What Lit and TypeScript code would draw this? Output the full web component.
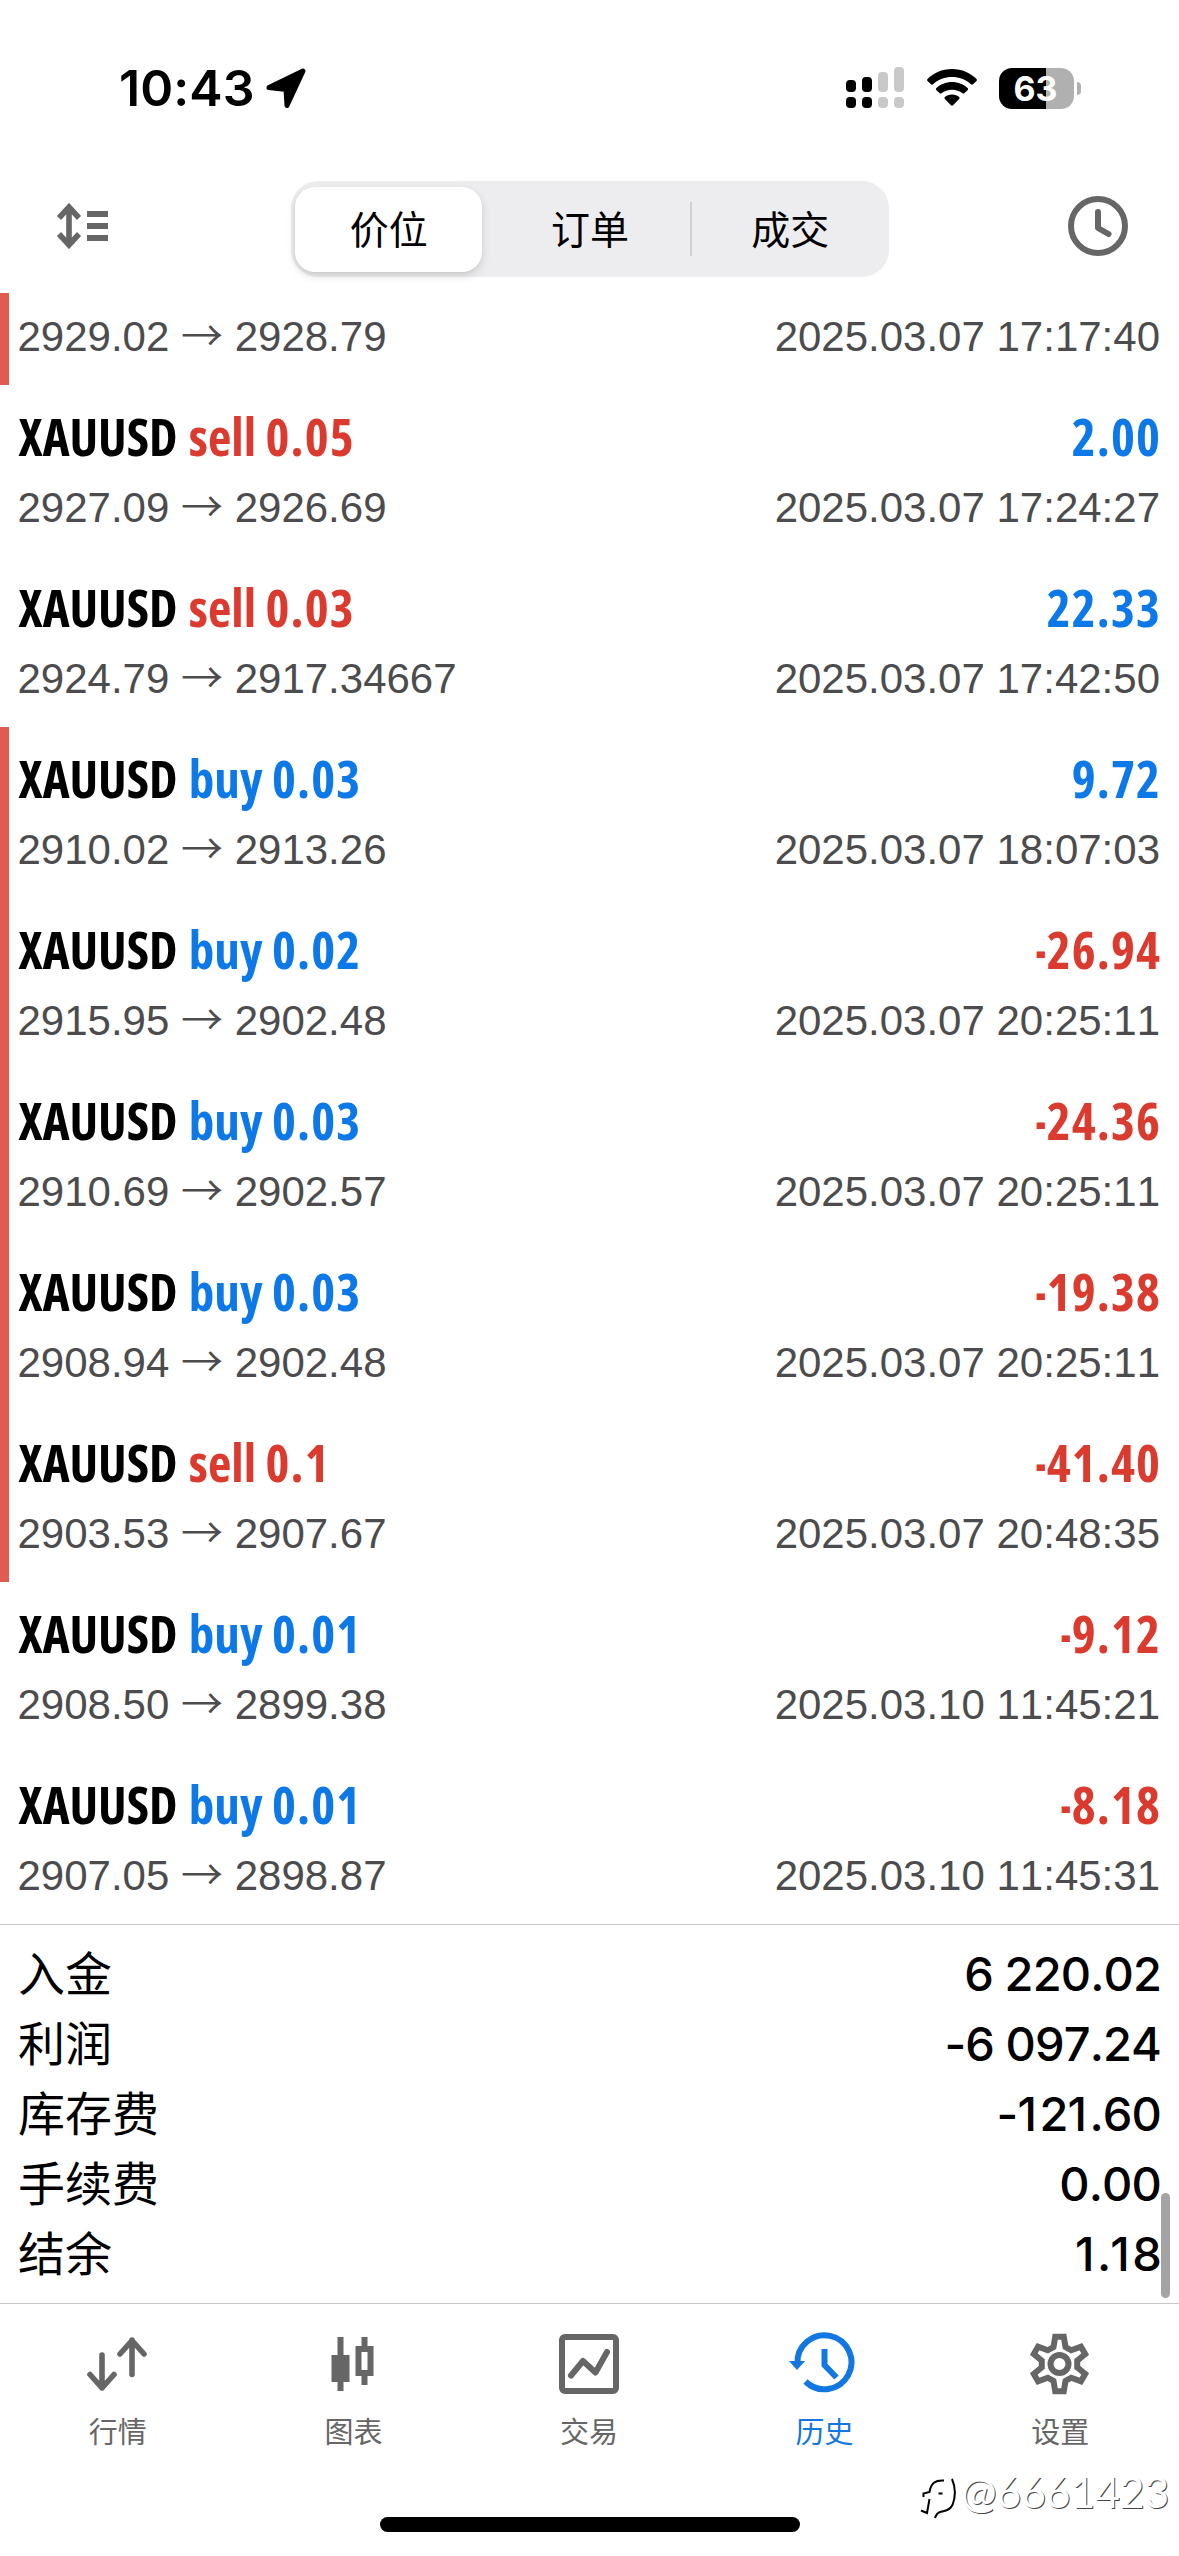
import { LitElement, html, css, svg, nothing } from "lit";
import { customElement, property } from "lit/decorators.js";
import { classMap } from "lit/directives/class-map.js";

interface Deal {
  side?: "buy" | "sell";
  lot?: string;
  profit?: string;
  open: string;
  close: string;
  time: string;
  marked?: boolean;
}

const DEALS: Deal[] = [
  { open: "2929.02", close: "2928.79", time: "2025.03.07 17:17:40", marked: true },
  { side: "sell", lot: "0.05", profit: "2.00", open: "2927.09", close: "2926.69", time: "2025.03.07 17:24:27" },
  { side: "sell", lot: "0.03", profit: "22.33", open: "2924.79", close: "2917.34667", time: "2025.03.07 17:42:50" },
  { side: "buy", lot: "0.03", profit: "9.72", open: "2910.02", close: "2913.26", time: "2025.03.07 18:07:03", marked: true },
  { side: "buy", lot: "0.02", profit: "-26.94", open: "2915.95", close: "2902.48", time: "2025.03.07 20:25:11", marked: true },
  { side: "buy", lot: "0.03", profit: "-24.36", open: "2910.69", close: "2902.57", time: "2025.03.07 20:25:11", marked: true },
  { side: "buy", lot: "0.03", profit: "-19.38", open: "2908.94", close: "2902.48", time: "2025.03.07 20:25:11", marked: true },
  { side: "sell", lot: "0.1", profit: "-41.40", open: "2903.53", close: "2907.67", time: "2025.03.07 20:48:35", marked: true },
  { side: "buy", lot: "0.01", profit: "-9.12", open: "2908.50", close: "2899.38", time: "2025.03.10 11:45:21" },
  { side: "buy", lot: "0.01", profit: "-8.18", open: "2907.05", close: "2898.87", time: "2025.03.10 11:45:31" },
];

const TOTALS: [string, string][] = [
  ["入金", "6 220.02"],
  ["利润", "-6 097.24"],
  ["库存费", "-121.60"],
  ["手续费", "0.00"],
  ["结余", "1.18"],
];

// Six-toothed gear outline centred on the origin.
const gearPath = (() => {
  const tooth = [[-6, -17], [-4.3, -27.2], [4.3, -27.2], [6, -17]];
  const pts: string[] = [];
  for (let k = 0; k < 6; k++) {
    const a = (k * Math.PI) / 3;
    for (const [x, y] of tooth) {
      pts.push(`${(x * Math.cos(a) - y * Math.sin(a)).toFixed(2)} ${(x * Math.sin(a) + y * Math.cos(a)).toFixed(2)}`);
    }
  }
  return `M${pts.join("L")}Z`;
})();

const TABS = [
  {
    label: "行情",
    icon: svg`<g fill="none" stroke="currentColor" stroke-width="5.6" stroke-linecap="round" stroke-linejoin="round">
      <path d="M14 21V54M2 40.500L14 54L26 40.500"/><path d="M44 40.500V6M32 20L44 6.500L56 20"/></g>`,
  },
  {
    label: "图表",
    icon: svg`<path fill="currentColor" fill-rule="evenodd" d="M14.500 3h6v18h6v27h-6v9h-6v-9h-6v-27h6zM38.500 3h6v9h6v30h-6v9h-6v-9h-6v-30h6zM38.500 18v18h6v-18z"/>`,
  },
  {
    label: "交易",
    icon: svg`<g fill="none" stroke="currentColor" stroke-width="6"><rect x="3" y="3" width="54" height="54" rx="3"/>
      <path stroke-linecap="round" stroke-linejoin="round" d="M12 41.500L24 27L36.500 38.500L48 18"/></g>`,
  },
  {
    label: "历史",
    icon: svg`<g fill="none" stroke="currentColor" stroke-width="6"><path d="M2.500 30A27 27 0 1 1 10.500 47.500"/>
      <path d="M29.500 15V31L41.500 43.500"/></g><path fill="currentColor" d="M-6 27H10L2 36z"/>`,
    active: true,
  },
  {
    label: "设置",
    icon: svg`<g transform="translate(29.500 30)" fill="none" stroke="currentColor" stroke-width="6">
      <path d=${gearPath}/><circle r="9" stroke-width="6"/></g>`,
  },
];

@customElement("status-bar")
class StatusBar extends LitElement {
  static styles = css`
    :host { display: flex; height: 181px; box-sizing: border-box; padding: 67px 98px 0 119px; justify-content: space-between; align-items: flex-start; }
    .left, .right { display: flex; align-items: center; height: 42px; }
    .time { font: 600 50px/42px Inter, sans-serif; letter-spacing: 0.1px; }
    .arrow { margin-left: 11px; }
    .signal { margin-right: 22px; }
    .wifi { margin-right: 22px; }
    .battery { display: flex; width: 75px; height: 41px; border-radius: 13px; background: linear-gradient(90deg, #000 47px, #b0b0b0 47px); color: #fff; justify-content: center; font: 700 34px/42px Inter, sans-serif; }
    .digits { margin-left: -2px; }
    .nub { width: 4px; height: 13px; margin-left: 3px; border-radius: 0 4px 4px 0; background: #b0b0b0; }
  `;
  render() {
    return html`
      <div class="left">
        <span class="time">10:43</span>
        <svg class="arrow" width="40" height="42" viewBox="0 0 40 42">
          <path d="M37 4L21 38.500L20 22.500L3 20.500Z" stroke="#000" stroke-width="5" stroke-linejoin="round"/>
        </svg>
      </div>
      <div class="right">
        <svg class="signal" width="59" height="42" viewBox="0 0 59 42">
          <g fill="#000"><rect y="13" width="10" height="12" rx="4"/><rect y="30" width="10" height="11" rx="4"/>
          <rect x="16" y="10" width="10" height="15" rx="4"/><rect x="16" y="30" width="10" height="11" rx="4"/></g>
          <g fill="#c9c9c9"><rect x="32" y="5" width="10" height="20" rx="4"/><rect x="32" y="30" width="10" height="11" rx="4"/>
          <rect x="48" width="10" height="25" rx="4"/><rect x="48" y="30" width="10" height="11" rx="4"/></g>
        </svg>
        <svg class="wifi" width="50" height="42" viewBox="0 0 50 42">
          <path d="M25 2C35 2 43.500 6 49.500 12Q50.300 13 49.500 14L46 17.300Q45 18 44 17.200C38.500 12.500 32 10 25 10S11.500 12.500 6 17.200Q5 18 4 17.300L.5 14Q-.3 13 .5 12C6.500 6 15 2 25 2z"/>
          <path d="M25 15C31.500 15 36.500 17.300 40.800 21.200Q41.600 22 40.800 23L37.300 26.300Q36.500 27 35.500 26.300C32.500 24 29 22.700 25 22.700S17.500 24 14.500 26.300Q13.500 27 12.700 26.300L9.200 23Q8.400 22 9.200 21.200C13.500 17.300 18.500 15 25 15z"/>
          <path d="M25 27.500C28 27.500 30.500 28.500 32.200 30Q33 31 32.200 31.900L26 38.300Q25 39.200 24 38.300L17.800 31.900Q17 31 17.800 30C19.500 28.500 22 27.500 25 27.500z"/>
        </svg>
        <div class="battery"><span class="digits">63</span></div>
        <div class="nub"></div>
      </div>
    `;
  }
}

@customElement("history-header")
class HistoryHeader extends LitElement {
  static styles = css`
    :host { display: flex; height: 112px; box-sizing: border-box; padding: 0 51px 0 56px; align-items: flex-start; color: #666; }
    .sort { margin: 22px 182px 0 0; }
    .clock { margin: 15px 0 0 179px; }
    .segments { display: grid; grid-template-columns: repeat(3, 1fr); grid-template-rows: 96px; width: 598px; border-radius: 27px; background: #ededef; color: #000; font: 400 39px/50px "Noto Sans CJK SC", sans-serif; }
    .segment { display: flex; justify-content: center; align-items: center; box-sizing: border-box; padding-bottom: 4px; }
    .segment.selected { margin: 5.500px 8px 5.500px 4px; border-radius: 20px; background: #fff; box-shadow: 0 4px 10px rgba(0, 0, 0, 0.13), 0 1px 3px rgba(0, 0, 0, 0.05); }
    .segment.last { background: linear-gradient(#d0d0d3, #d0d0d3) no-repeat 0 50% / 2px 54px; padding-left: 2px; }
  `;
  render() {
    return html`
      <svg class="sort" width="53" height="46" viewBox="0 0 53 46">
        <g fill="none" stroke="currentColor" stroke-width="5.600"><path d="M13 4V42M3 15L13 4L23 15M3 31L13 42L23 31"/></g>
        <path fill="currentColor" d="M31 8h21v6h-21zM31 20h21v6h-21zM31 32h21v6h-21z"/>
      </svg>
      <div class="segments">
        <div class="segment selected">价位</div>
        <div class="segment">订单</div>
        <div class="segment last">成交</div>
      </div>
      <svg class="clock" width="60" height="60" viewBox="0 0 60 60">
        <g fill="none" stroke="currentColor" stroke-width="6" stroke-linecap="round" stroke-linejoin="round"><circle cx="30" cy="30" r="27"/><path d="M30 16V32L40.500 38"/></g>
      </svg>
    `;
  }
}

@customElement("deal-row")
class DealRow extends LitElement {
  @property({ attribute: false }) deal!: Deal;
  static styles = css`
    :host { display: block; }
    .row { height: 171px; box-sizing: border-box; padding: 21px 19px 0 17.500px; border-left: 0 solid #e05c50; }
    .row.marked { border-left-width: 9px; padding-left: 8.500px; }
    .row.cut { height: 92px; padding-top: 14px; }
    .line { display: flex; justify-content: space-between; height: 60px; white-space: pre; }
    .title { font: 660 51px/60px "Open Sans", sans-serif; font-stretch: 75%; margin-bottom: 12px; padding-left: 1px; }
    .figure { letter-spacing: 1.100px; }
    .side { margin-left: 2px; letter-spacing: 0.100px; }
    .profit { margin-right: -1px; }
    .minus { display: inline-block; transform: scaleX(0.65); transform-origin: right; }
    .buy, .gain { color: #0d78e8; }
    .sell, .loss { color: #db3b2f; }
    .detail { font: 400 42px/60px "Liberation Sans", Arial, sans-serif; font-kerning: none; color: #4c4c4e; }
    .to { font: 350 42px/0 "Noto Sans CJK SC", sans-serif; }
  `;
  render() {
    const d = this.deal;
    const loss = !!d.profit?.startsWith("-");
    return html`<div class=${classMap({ row: true, marked: !!d.marked, cut: !d.side })}>
      ${d.side
        ? html`<div class="line title">
            <span>XAUUSD <span class="side ${d.side}">${d.side} <span class="figure">${d.lot}</span></span></span>
            <span class="figure profit ${loss ? "loss" : "gain"}">${loss ? html`<span class="minus">-</span>${d.profit!.slice(1)}` : d.profit}</span>
          </div>`
        : nothing}
      <div class="line detail"><span>${d.open} <span class="to">→</span> ${d.close}</span><span>${d.time}</span></div>
    </div>`;
  }
}

@customElement("app-root")
class AppRoot extends LitElement {
  static styles = css`
    :host { display: flex; flex-direction: column; position: relative; width: 1179px; height: 2556px; overflow: hidden; background: #fff; color: #000; }
    .summary { height: 380px; box-sizing: border-box; padding: 11px 18px 0 18px; border-top: 1px solid #c6c6c8; border-bottom: 1px solid #c6c6c8; }
    .total { display: flex; justify-content: space-between; align-items: baseline; height: 70px; line-height: 70px; white-space: pre; }
    .name { font-family: "Noto Sans CJK SC", sans-serif; font-size: 47px; }
    .value { font-family: Inter, sans-serif; font-weight: 500; font-size: 47px; font-kerning: none; letter-spacing: -0.900px; }
    .one { letter-spacing: 2.500px; }
    .thumb { position: absolute; left: 1161px; top: 2193px; width: 9px; height: 105px; border-radius: 5px; background: #a4a4a4; }
    .tabs { display: grid; grid-template-columns: repeat(5, 1fr); height: 213px; box-sizing: border-box; padding: 30px 1px 0 0; color: #666; font: 400 29px/36px "Noto Sans CJK SC", sans-serif; }
    .tab { display: flex; flex-direction: column; align-items: center; gap: 18px; }
    .tab.active { color: #1277e0; }
    .tab svg { overflow: visible; }
    .home { width: 420px; height: 15px; border-radius: 8px; background: #000; align-self: center; }
    .watermark { position: absolute; left: 920px; top: 2467px; display: flex; align-items: flex-start; gap: 5px; color: #fff; font: 400 42.500px/50px Lato, sans-serif; text-shadow: 1px 1px 0 #444; }
    .mark { margin-top: 10px; }
  `;
  render() {
    return html`
      <status-bar></status-bar>
      <history-header></history-header>
      <div class="list">${DEALS.map((d) => html`<deal-row .deal=${d}></deal-row>`)}</div>
      <div class="summary">
        ${TOTALS.map(([n, v]) => html`<div class="total"><span class="name">${n}</span><span class="value">${v
          .split(/(1)/)
          .map((s) => (s === "1" ? html`<span class="one">1</span>` : s))}</span></div>`)}
      </div>
      <nav class="tabs">
        ${TABS.map((t) => html`<div class=${classMap({ tab: true, active: !!t.active })}>
          <svg width="60" height="60" viewBox="0 0 60 60">${t.icon}</svg><span>${t.label}</span></div>`)}
      </nav>
      <div class="home"></div>
      <div class="thumb"></div>
      <div class="watermark">
        <svg class="mark" width="36" height="44" viewBox="0 0 36 44" fill="none" stroke="#000" stroke-width="2">
          <path d="M24 3.500C15 3 11 6 9.500 15L3.500 16.500V20"/><path d="M9.500 22L7 36L1 33.500"/>
          <path d="M32 2C35.500 10 35.500 20 32.500 28C30 33 25 34 20 35C17 36 16 38 15 41"/><path d="M18.500 16.500h4"/>
        </svg>
        <span>@6661423</span>
      </div>
    `;
  }
}
